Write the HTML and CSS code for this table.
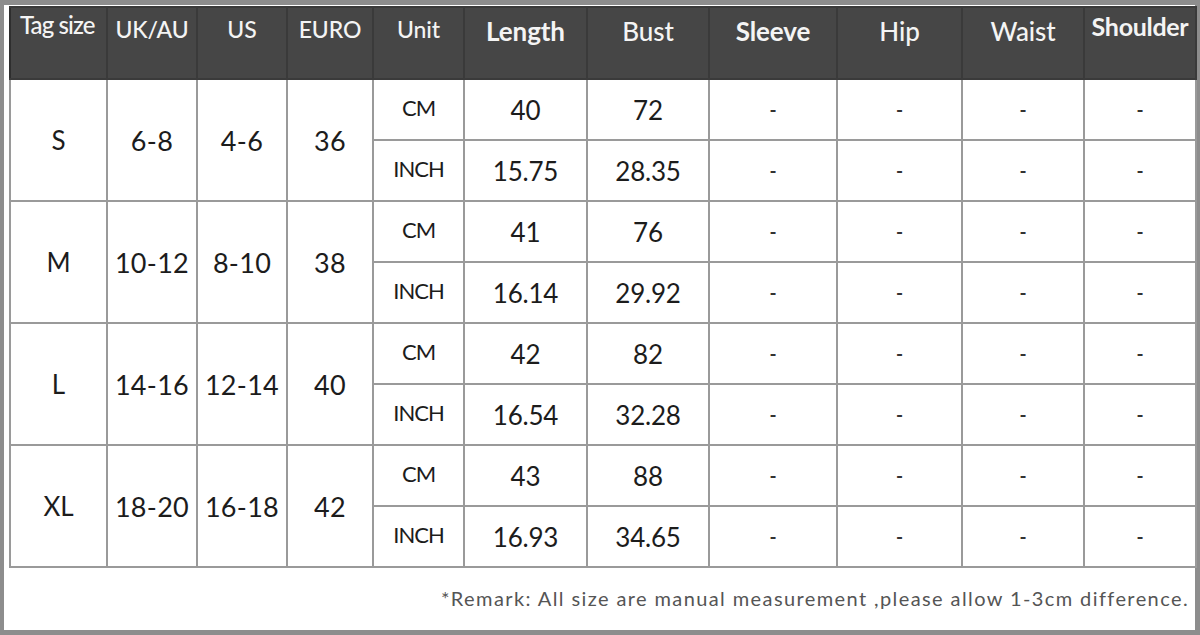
FILE: index.html
```html
<!DOCTYPE html>
<html>
<head>
<meta charset="utf-8">
<link rel="stylesheet" href="styles.css">
</head>
<body>
<div class="frame">
  <table class="chart">
    <colgroup>
      <col class="c-tag"><col class="c-uk"><col class="c-us"><col class="c-eu"><col class="c-unit">
      <col class="c-len"><col class="c-bust"><col class="c-sleeve"><col class="c-hip"><col class="c-waist"><col class="c-sh">
    </colgroup>
    <thead>
      <tr>
        <th class="h-small">Tag size</th>
        <th>UK/AU</th>
        <th>US</th>
        <th>EURO</th>
        <th>Unit</th>
        <th class="h-big h-bold">Length</th>
        <th class="h-big">Bust</th>
        <th class="h-big h-bold">Sleeve</th>
        <th class="h-big">Hip</th>
        <th class="h-big">Waist</th>
        <th class="h-big h-sh">Shoulder</th>
      </tr>
    </thead>
    <tbody>
      <tr>
        <td rowspan="2" class="size">S</td><td rowspan="2" class="range">6-8</td><td rowspan="2" class="range">4-6</td><td rowspan="2" class="range">36</td>
        <td class="unit">CM</td><td class="num">40</td><td class="num">72</td><td class="dash">-</td><td class="dash">-</td><td class="dash">-</td><td class="dash">-</td>
      </tr>
      <tr>
        <td class="unit">INCH</td><td class="num">15.75</td><td class="num">28.35</td><td class="dash">-</td><td class="dash">-</td><td class="dash">-</td><td class="dash">-</td>
      </tr>
      <tr>
        <td rowspan="2" class="size">M</td><td rowspan="2" class="range">10-12</td><td rowspan="2" class="range">8-10</td><td rowspan="2" class="range">38</td>
        <td class="unit">CM</td><td class="num">41</td><td class="num">76</td><td class="dash">-</td><td class="dash">-</td><td class="dash">-</td><td class="dash">-</td>
      </tr>
      <tr>
        <td class="unit">INCH</td><td class="num">16.14</td><td class="num">29.92</td><td class="dash">-</td><td class="dash">-</td><td class="dash">-</td><td class="dash">-</td>
      </tr>
      <tr>
        <td rowspan="2" class="size">L</td><td rowspan="2" class="range">14-16</td><td rowspan="2" class="range">12-14</td><td rowspan="2" class="range">40</td>
        <td class="unit">CM</td><td class="num">42</td><td class="num">82</td><td class="dash">-</td><td class="dash">-</td><td class="dash">-</td><td class="dash">-</td>
      </tr>
      <tr>
        <td class="unit">INCH</td><td class="num">16.54</td><td class="num">32.28</td><td class="dash">-</td><td class="dash">-</td><td class="dash">-</td><td class="dash">-</td>
      </tr>
      <tr>
        <td rowspan="2" class="size">XL</td><td rowspan="2" class="range">18-20</td><td rowspan="2" class="range">16-18</td><td rowspan="2" class="range">42</td>
        <td class="unit">CM</td><td class="num">43</td><td class="num">88</td><td class="dash">-</td><td class="dash">-</td><td class="dash">-</td><td class="dash">-</td>
      </tr>
      <tr>
        <td class="unit">INCH</td><td class="num">16.93</td><td class="num">34.65</td><td class="dash">-</td><td class="dash">-</td><td class="dash">-</td><td class="dash">-</td>
      </tr>
    </tbody>
  </table>
  <div class="remark">*Remark: All size are manual measurement ,please allow 1-3cm difference.</div>
</div>
</body>
</html>
```

FILE: styles.css
```css
html, body {
  margin: 0;
  padding: 0;
}
body {
  background: #8d8d8d;
  width: 1200px;
  height: 635px;
  padding: 5px 5px 5px 4px;
  box-sizing: border-box;
  font-family: Lato, "Open Sans", sans-serif;
  color: #1c1c1c;
}
.frame {
  background: #fff;
  height: 625px;
  padding: 1px 0 0 5px;
  box-sizing: border-box;
}
.chart {
  border-collapse: collapse;
  table-layout: fixed;
  width: 1186px;
}
.c-tag { width: 97px; }
.c-uk { width: 90px; }
.c-us { width: 90px; }
.c-eu { width: 86px; }
.c-unit { width: 91px; }
.c-len { width: 123px; }
.c-bust { width: 122px; }
.c-sleeve { width: 128px; }
.c-hip { width: 125px; }
.c-waist { width: 122px; }
.c-sh { width: 112px; }

.chart th {
  background: #464646;
  color: #f4f4f4;
  height: 72px;
  box-sizing: border-box;
  vertical-align: top;
  padding: 7px 0 0;
  font-size: 23px;
  font-weight: 500;
  border: 2px solid #3a3a3a;
  border-left-color: #2e2e2e;
  white-space: nowrap;
  letter-spacing: -0.1px;
}
.chart th.h-small {
  font-size: 24px;
  padding-top: 2px;
  letter-spacing: -0.9px;
  text-align: left;
  padding-left: 9px;
}
.chart th.h-big {
  font-size: 26px;
  padding-top: 7px;
}
.chart th.h-bold {
  font-weight: 700;
}
.chart th.h-sh {
  font-weight: 700;
  font-size: 25px;
  padding-top: 3px;
  letter-spacing: -0.3px;
}
.chart td {
  border: 2px solid #9a9a9a;
  text-align: center;
  vertical-align: middle;
  height: 55px;
  padding: 0;
  white-space: nowrap;
}
.chart td.size {
  font-size: 26px;
  color: #1c1c1c;
}
.chart td.range {
  font-size: 27px;
  letter-spacing: 0.3px;
}
.chart td.num {
  font-size: 26px;
  letter-spacing: -0.2px;
}
.chart td.unit {
  font-size: 22px;
  letter-spacing: -1px;
  padding-bottom: 4px;
}
.chart td.dash {
  font-size: 19px;
  font-weight: 700;
  color: #333;
}
.remark {
  height: 60px;
  line-height: 60px;
  text-align: right;
  padding-right: 6px;
  font-size: 20px;
  color: #555;
  letter-spacing: 1.4px;
}
```
